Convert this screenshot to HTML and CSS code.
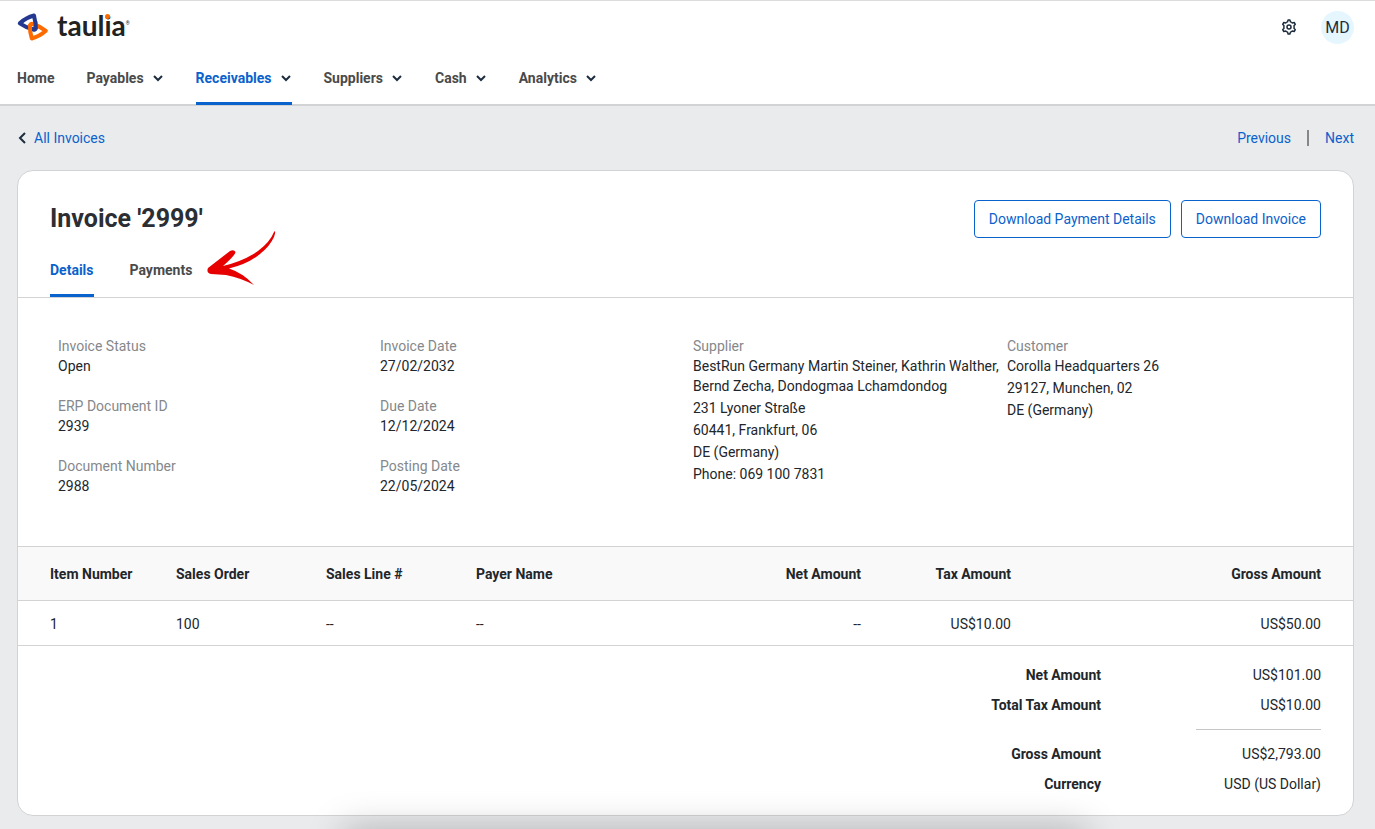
FILE: index.html
```html
<!doctype html>
<html lang="en">
  <head>
    <meta charset="UTF-8" />
    <meta name="viewport" content="width=device-width, initial-scale=1.0" />
    <title>Invoice '2999'</title>
    <link rel="stylesheet" href="styles.css">
  </head>
  <body>
    <header class="header">
      <div class="topbar">
        <a class="logo" href="#">
          <svg class="logo-mark" width="32" height="28" viewBox="0 0 32 28" fill="none" stroke-linejoin="round" stroke-width="4" aria-hidden="true">
            <path d="M2.800 10.300Q9 4.500 17 2.500Q18.500 9 18.800 15Q18.300 17 16 16.300Q9 14.500 2.800 10.300Z" stroke="#24388f" />
            <path d="M13 12Q14 10.500 16 11Q23 13.500 28.800 17.800Q22.500 23.500 14.800 25.500Q12.500 18 13 12Z" stroke="#ff6a00" />
            <path d="M18.300 8.500Q18.800 12 18.800 15Q18.300 17 15.500 16.200" stroke="#24388f" />
          </svg>
          <span class="logo-text">taul<span class="logo-i">i</span>a</span>
          <span class="logo-reg">®</span>
        </a>
        <div class="user">
          <button class="icon-button" type="button" aria-label="Settings">
            <svg width="16" height="16" viewBox="0 0 16 16" fill="none" stroke="#1d2d3e" stroke-width="1.500" stroke-linejoin="round" aria-hidden="true">
              <path d="M6.500 2.900L7.100 1.100H8.900L9.500 2.900Q10.500 3.200 11.300 4L13.200 3.500L14.300 5.300L13 6.700Q13.300 8 13 9.300L14.300 10.700L13.200 12.500L11.300 12Q10.500 12.800 9.500 13.100L8.900 14.900H7.100L6.500 13.100Q5.500 12.800 4.700 12L2.800 12.500L1.700 10.700L3 9.300Q2.700 8 3 6.700L1.700 5.300L2.800 3.500L4.700 4Q5.500 3.200 6.500 2.900Z" />
              <circle cx="8" cy="8" r="2" />
            </svg>
          </button>
          <button class="avatar" type="button">MD</button>
        </div>
      </div>
      <nav class="nav">
        <a href="#">Home</a>
        <a href="#">Payables <svg class="chevron" viewBox="0 0 12 8"><path d="M2 2l4 4 4-4" /></svg></a>
        <a class="active" href="#">Receivables <svg class="chevron" viewBox="0 0 12 8"><path d="M2 2l4 4 4-4" /></svg></a>
        <a href="#">Suppliers <svg class="chevron" viewBox="0 0 12 8"><path d="M2 2l4 4 4-4" /></svg></a>
        <a href="#">Cash <svg class="chevron" viewBox="0 0 12 8"><path d="M2 2l4 4 4-4" /></svg></a>
        <a href="#">Analytics <svg class="chevron" viewBox="0 0 12 8"><path d="M2 2l4 4 4-4" /></svg></a>
      </nav>
    </header>

    <main class="main">
      <div class="crumbs">
        <a class="back" href="#">
          <svg width="9" height="12" viewBox="0 0 9 12" aria-hidden="true"><path d="M8 1L3 6l5 5" /></svg>
          All Invoices
        </a>
        <div class="pager">
          <a href="#">Previous</a>
          <span class="divider"></span>
          <a href="#">Next</a>
        </div>
      </div>

      <section class="card">
        <div class="card-header">
          <h1>Invoice '2999'</h1>
          <div class="actions">
            <button class="btn" type="button">Download Payment Details</button>
            <button class="btn" type="button">Download Invoice</button>
          </div>
        </div>

        <div class="tabs">
          <a class="active" href="#">Details</a>
          <a href="#">Payments</a>
          <svg class="arrow" width="70" height="56" viewBox="0 0 70 56" fill="#e60000" aria-hidden="true">
            <path d="M68 0Q68.500 2 67 6Q63 15 53 23Q41 33 22 37.500Q36 42 47 54Q34 47 19 44L4 43Q-1 42 1 37L23 20Q27 18 28.500 21Q28.500 24 16 35Q37 30 51 20Q63 11 67 1Z" />
          </svg>
        </div>

        <div class="details">
          <dl>
            <div><dt>Invoice Status</dt><dd>Open</dd></div>
            <div><dt>ERP Document ID</dt><dd>2939</dd></div>
            <div><dt>Document Number</dt><dd>2988</dd></div>
          </dl>
          <dl>
            <div><dt>Invoice Date</dt><dd>27/02/2032</dd></div>
            <div><dt>Due Date</dt><dd>12/12/2024</dd></div>
            <div><dt>Posting Date</dt><dd>22/05/2024</dd></div>
          </dl>
          <dl>
            <dt>Supplier</dt>
            <dd>BestRun Germany Martin Steiner, Kathrin Walther, Bernd Zecha, Dondogmaa Lchamdondog</dd>
            <dd class="address">231 Lyoner Straße<br>60441, Frankfurt, 06<br>DE (Germany)<br>Phone: 069 100 7831</dd>
          </dl>
          <dl>
            <dt>Customer</dt>
            <dd>Corolla Headquarters 26</dd>
            <dd class="address">29127, Munchen, 02<br>DE (Germany)</dd>
          </dl>
        </div>

        <table class="items">
          <colgroup>
            <col class="col-first">
            <col class="col">
            <col class="col">
            <col class="col-payer">
            <col class="col">
            <col class="col">
            <col>
          </colgroup>
          <thead>
            <tr>
              <th>Item Number</th>
              <th>Sales Order</th>
              <th>Sales Line #</th>
              <th>Payer Name</th>
              <th class="num">Net Amount</th>
              <th class="num">Tax Amount</th>
              <th class="num">Gross Amount</th>
            </tr>
          </thead>
          <tbody>
            <tr>
              <td>1</td>
              <td>100</td>
              <td>--</td>
              <td>--</td>
              <td class="num">--</td>
              <td class="num">US$10.00</td>
              <td class="num">US$50.00</td>
            </tr>
          </tbody>
        </table>

        <dl class="totals">
          <div><dt>Net Amount</dt><dd>US$101.00</dd></div>
          <div><dt>Total Tax Amount</dt><dd>US$10.00</dd></div>
          <div class="sum"><dt>Gross Amount</dt><dd>US$2,793.00</dd></div>
          <div><dt>Currency</dt><dd>USD (US Dollar)</dd></div>
        </dl>
      </section>
    </main>

    <div class="bottom-shadow"></div>
  </body>
</html>
```
FILE: styles.css
```css
* {
  box-sizing: border-box;
}
body {
  margin: 0;
  font-family: Roboto, "Liberation Sans", sans-serif;
  font-size: 14px;
  line-height: 20px;
  color: #22262b;
  background: #e9ebed;
}
a {
  color: #0a62cc;
  text-decoration: none;
}
button {
  font-family: inherit;
  cursor: pointer;
}
dl,
dd {
  margin: 0;
}

/* header */
.header {
  background: white;
  border-top: 1px solid #dcdcdc;
  border-bottom: 2px solid #d2d3d4;
}
.topbar {
  display: flex;
  justify-content: space-between;
  align-items: center;
  height: 52px;
  padding: 0 21px 0 17px;
}
.logo {
  display: flex;
  align-items: center;
  color: #222;
}
.logo-text {
  margin-left: 8px;
  padding-bottom: 4px;
  font-family: Lato, sans-serif;
  font-size: 28px;
  font-weight: 700;
  line-height: 24px;
}
.logo-i {
  position: relative;
}
.logo-i::before {
  content: "";
  position: absolute;
  top: 6px;
  left: 1px;
  width: 5px;
  height: 5px;
  border-radius: 50%;
  background: #ff6a00;
}
.logo-reg {
  align-self: flex-start;
  font-size: 5px;
}
.user {
  display: flex;
  align-items: center;
  gap: 24px;
}
.icon-button {
  display: flex;
  padding: 0;
  border: none;
  background: none;
}
.avatar {
  width: 33px;
  height: 33px;
  padding: 0;
  border: none;
  border-radius: 50%;
  background: #e6f6ff;
  color: #1d2d3e;
  font-size: 16px;
}
.nav {
  display: flex;
  gap: 32px;
  height: 51px;
  padding: 0 17px;
}
.nav a {
  display: flex;
  align-items: center;
  gap: 8px;
  height: 52px;
  padding-top: 1px;
  border-bottom: 3px solid transparent;
  color: #4a4a4a;
  font-weight: 700;
}
.nav a.active {
  border-color: #0a62cc;
  color: #0a62cc;
}
.chevron {
  width: 12px;
  height: 8px;
  fill: none;
  stroke: #1d2d3e;
  stroke-width: 2;
}

/* page */
.main {
  padding: 22px 21px 13px 17px;
}
.crumbs {
  display: flex;
  justify-content: space-between;
  margin-bottom: 22px;
}
.back {
  display: flex;
  align-items: center;
  gap: 8px;
}
.back svg {
  fill: none;
  stroke: #1d2d3e;
  stroke-width: 2;
}
.pager {
  display: flex;
  align-items: center;
  gap: 16px;
}
.divider {
  width: 2px;
  height: 16px;
  background: #85888b;
}
.card {
  border: 1px solid #d2d3d4;
  border-radius: 16px;
  background: white;
  overflow: hidden;
}
.card-header {
  display: flex;
  justify-content: space-between;
  align-items: center;
  padding: 29px 32px 0;
}
h1 {
  margin: 0;
  font-size: 25px;
  line-height: 32px;
  color: #2b2e33;
}
.actions {
  display: flex;
  gap: 10px;
}
.btn {
  height: 38px;
  padding: 0 14px;
  border: 1px solid #0a62cc;
  border-radius: 4px;
  background: white;
  color: #0a62cc;
  font-size: 14px;
}
.tabs {
  position: relative;
  display: flex;
  gap: 36px;
  height: 60px;
  padding: 0 32px;
  border-bottom: 1px solid #d2d3d4;
}
.tabs a {
  padding-top: 22px;
  border-bottom: 3px solid transparent;
  color: #4a4a4a;
  font-weight: 700;
}
.tabs a.active {
  border-color: #0a62cc;
  color: #0a62cc;
}
.arrow {
  position: absolute;
  left: 189px;
  top: -7px;
}

/* invoice details */
.details {
  display: grid;
  grid-template-columns: 322px 313px 314px 1fr;
  padding: 38px 32px 30px 40px;
}
.details div {
  margin-bottom: 20px;
}
.details dt {
  color: #85888b;
}
.details .address {
  padding-top: 1px;
  line-height: 22px;
}

/* line items */
.items {
  width: 100%;
  table-layout: fixed;
  border-collapse: collapse;
}
.col-first {
  width: 158px;
}
.col {
  width: 150px;
}
.col-payer {
  width: 235px;
}
.items th,
.items td {
  padding: 0;
  text-align: left;
  border-bottom: 1px solid #d2d3d4;
}
.items th {
  height: 54px;
  border-top: 1px solid #d2d3d4;
  background: #f9f9f9;
}
.items td {
  height: 45px;
  padding-top: 2px;
}
.items .num {
  text-align: right;
}
.items tr > :first-child {
  padding-left: 32px;
}
.items tr > :last-child {
  padding-right: 32px;
}

/* totals */
.totals {
  padding: 14px 32px 16px;
}
.totals div {
  display: flex;
  justify-content: flex-end;
  gap: 95px;
  line-height: 30px;
}
.totals dt {
  font-weight: 700;
}
.totals dd {
  width: 125px;
  text-align: right;
}
.totals .sum dt {
  margin-top: 19px;
}
.totals .sum dd {
  margin-top: 9px;
  padding-top: 9px;
  border-top: 1px solid #c4c6c8;
}

/* shadow of the panel docked under the window */
.bottom-shadow {
  position: fixed;
  top: 100%;
  left: 25%;
  right: 21%;
  height: 40px;
  box-shadow: 0 0 36px rgba(0, 0, 0, 0.25);
  pointer-events: none;
}
```
